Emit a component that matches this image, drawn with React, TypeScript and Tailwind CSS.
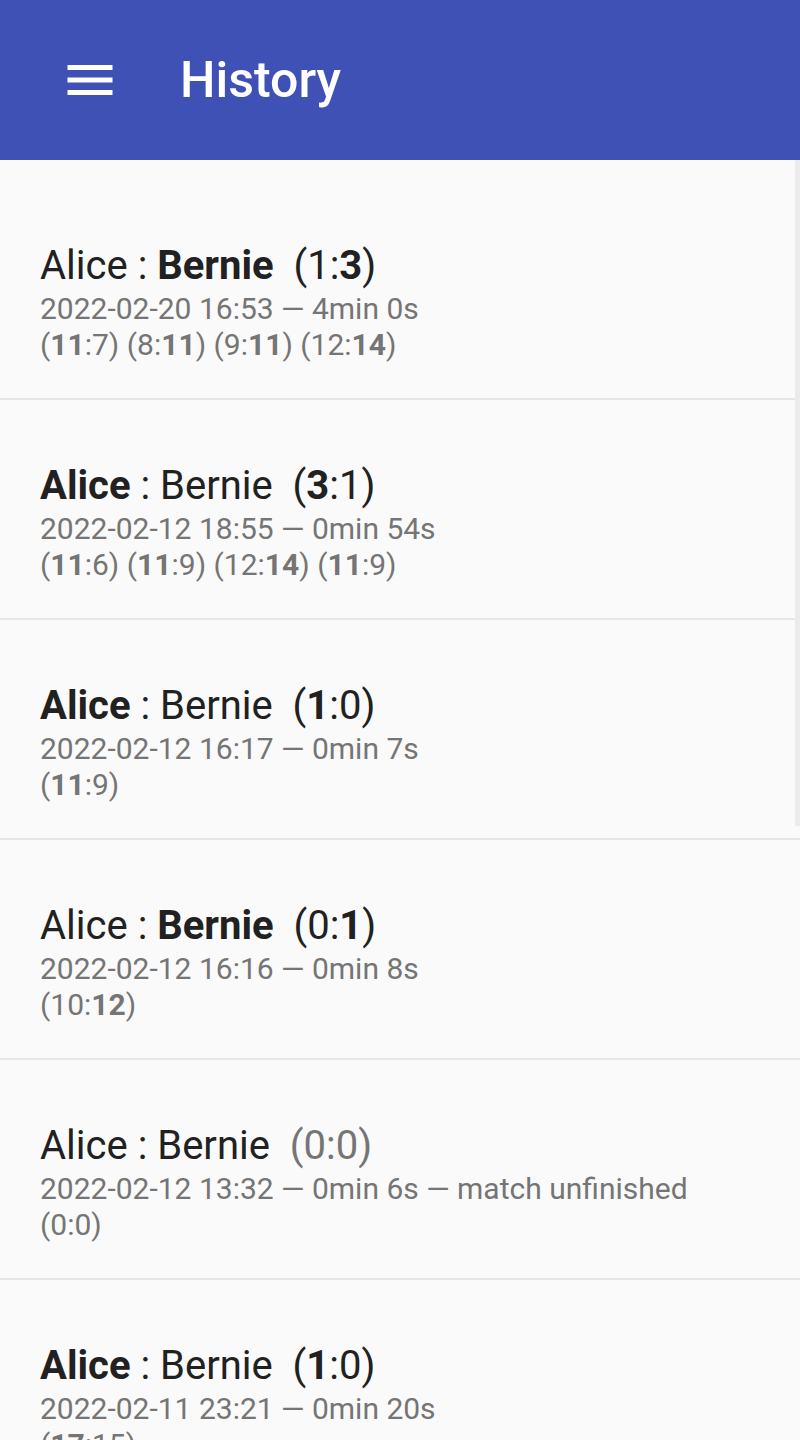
import React from "react";

type Seg = { t: string; b?: boolean };

type Match = {
  a: boolean;
  b: boolean;
  score: [string, boolean][];
  greyScore?: boolean;
  meta: string;
  sets: Seg[][];
};

const S = (t: string, b?: boolean): Seg => ({ t, b });

const matches: Match[] = [
  {
    a: false,
    b: true,
    score: [["1", false], ["3", true]],
    meta: "2022-02-20 16:53 — 4min 0s",
    sets: [
      [S("11", true), S("7")],
      [S("8"), S("11", true)],
      [S("9"), S("11", true)],
      [S("12"), S("14", true)],
    ],
  },
  {
    a: true,
    b: false,
    score: [["3", true], ["1", false]],
    meta: "2022-02-12 18:55 — 0min 54s",
    sets: [
      [S("11", true), S("6")],
      [S("11", true), S("9")],
      [S("12"), S("14", true)],
      [S("11", true), S("9")],
    ],
  },
  {
    a: true,
    b: false,
    score: [["1", true], ["0", false]],
    meta: "2022-02-12 16:17 — 0min 7s",
    sets: [[S("11", true), S("9")]],
  },
  {
    a: false,
    b: true,
    score: [["0", false], ["1", true]],
    meta: "2022-02-12 16:16 — 0min 8s",
    sets: [[S("10"), S("12", true)]],
  },
  {
    a: false,
    b: false,
    score: [["0", false], ["0", false]],
    greyScore: true,
    meta: "2022-02-12 13:32 — 0min 6s — match unfinished",
    sets: [[S("0"), S("0")]],
  },
  {
    a: true,
    b: false,
    score: [["1", true], ["0", false]],
    meta: "2022-02-11 23:21 — 0min 20s",
    sets: [[S("17", true), S("15")]],
  },
];

function Row({ m }: { m: Match }) {
  return (
    <div className="h-[220px] border-b-2 border-[#e6e6e6] pl-10 pt-[61px]">
      <div className="text-[40px] leading-[50px] text-[#212121] whitespace-pre">
        <span className={m.a ? "font-bold" : ""}>Alice</span>
        {" : "}
        <span className={m.b ? "font-bold" : ""}>Bernie</span>
        {"  "}
        <span className={m.greyScore ? "text-[#757575]" : ""}>
          (<span className={m.score[0][1] ? "font-bold" : ""}>{m.score[0][0]}</span>:
          <span className={m.score[1][1] ? "font-bold" : ""}>{m.score[1][0]}</span>)
        </span>
      </div>
      <div className="text-[30px] leading-[36px] text-[#757575] whitespace-pre">{m.meta}</div>
      <div className="text-[30px] leading-[36px] text-[#757575] whitespace-pre">
        {m.sets.map((s, i) => (
          <span key={i}>
            {i > 0 ? " " : ""}(
            <span className={s[0].b ? "font-bold" : ""}>{s[0].t}</span>:
            <span className={s[1].b ? "font-bold" : ""}>{s[1].t}</span>)
          </span>
        ))}
      </div>
    </div>
  );
}

export default function App() {
  return (
    <div
      className="relative h-[1440px] w-[800px] overflow-hidden bg-[#fafafa]"
      style={{ fontFamily: "Roboto, 'Noto Sans', sans-serif" }}
    >
      <header className="flex h-[160px] items-center bg-[#3f51b5]">
        <div className="ml-[60px] flex h-[60px] w-[60px] items-center justify-center">
          <svg width="60" height="60" viewBox="0 0 24 24" fill="#ffffff">
            <path d="M3 6h18v2H3zM3 11h18v2H3zM3 16h18v2H3z" />
          </svg>
        </div>
        <h1 className="ml-[60px] text-[50px] font-medium text-white">History</h1>
      </header>
      <div className="pt-[20px]">
        {matches.map((m, i) => (
          <Row key={i} m={m} />
        ))}
      </div>
      <div className="absolute right-0 top-[160px] h-[666px] w-[5px] bg-[#ebebeb]" />
    </div>
  );
}
